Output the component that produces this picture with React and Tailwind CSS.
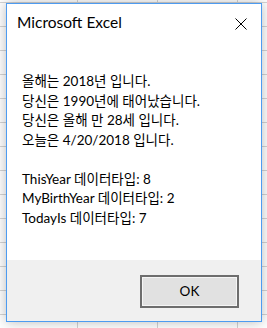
import React from "react";

const lines1 = [
  "올해는 2018년 입니다.",
  "당신은 1990년에 태어났습니다.",
  "당신은 올해 만 28세 입니다.",
  "오늘은 4/20/2018 입니다.",
];

const lines2 = [
  "ThisYear 데이터타입: 8",
  "MyBirthYear 데이터타입: 2",
  "TodayIs 데이터타입: 7",
];

const App = () => {
  return (
    <div className="w-[267px] h-[328px] overflow-hidden bg-white bg-[linear-gradient(to_right,#d4d4d4_1px,transparent_1px),linear-gradient(to_bottom,#d4d4d4_1px,transparent_1px)] bg-[size:80px_24px] bg-[position:77px_2px] pt-[3px] pl-[6px]">
      <div
        className="w-[256px] h-[319px] bg-white border border-[#4d9bf0] shadow-[0_0_12px_rgba(0,0,0,0.28)] flex flex-col text-black"
        style={{ fontFamily: 'Lato, "Noto Sans CJK KR", sans-serif' }}
      >
        {/* title bar */}
        <div className="h-[38px] flex items-center justify-between pl-[10px] pr-[14px]">
          <span className="text-[15.5px] leading-none">Microsoft Excel</span>
          <svg width="12" height="12" viewBox="0 0 12 12" className="mt-[1px]">
            <path d="M0.5 0.5 L11.5 11.5 M11.5 0.5 L0.5 11.5" stroke="#000" strokeWidth="1" />
          </svg>
        </div>

        {/* message */}
        <div className="flex-1 pt-[30px] pl-[15px] text-[13.5px] leading-[19.5px]">
          {lines1.map((l) => (
            <div key={l}>{l}</div>
          ))}
          <div>&nbsp;</div>
          {lines2.map((l) => (
            <div key={l}>{l}</div>
          ))}
        </div>

        {/* footer */}
        <div className="h-[61px] bg-[#f0f0f0] flex justify-end items-start pt-[15px] pr-[22px]">
          <button className="w-[99px] h-[33px] border-2 border-[#6d6d6d] bg-[#e1e1e1] shadow-[inset_0_0_0_1px_#f5f5f5] text-[13.5px] flex items-center justify-center">
            OK
          </button>
        </div>
      </div>
    </div>
  );
};

export default App;
